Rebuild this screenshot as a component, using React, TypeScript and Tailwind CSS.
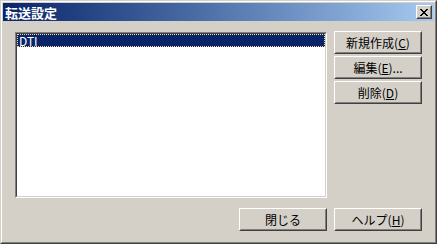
import React from "react"

const font = { fontFamily: '"Noto Sans CJK JP", "DejaVu Sans", sans-serif' }

function Key({ k }: { k: string }) {
  return <span className="underline underline-offset-1">{k}</span>
}

function WinButton({ children, className = "" }: { children: React.ReactNode; className?: string }) {
  return (
    <div className={`border border-t-white border-l-white border-b-[#404040] border-r-[#404040] ${className}`}>
      <div className="flex h-full w-full items-center justify-center border border-t-[#d4d0c8] border-l-[#d4d0c8] border-b-[#808080] border-r-[#808080] bg-[#d4d0c8] text-[12px] leading-none text-black">
        {children}
      </div>
    </div>
  )
}

export default function App() {
  return (
    <div className="h-[244px] w-[437px] overflow-hidden select-none" style={font}>
      {/* window frame */}
      <div className="h-full w-full border border-t-[#d4d0c8] border-l-[#d4d0c8] border-b-[#404040] border-r-[#404040]">
        <div className="flex h-full w-full flex-col border border-t-white border-l-white border-b-[#808080] border-r-[#808080] bg-[#d4d0c8] p-px">
          {/* title bar */}
          <div className="flex h-[18px] items-center justify-between bg-gradient-to-r from-[#0a246a] to-[#a6caf0] pl-[2px] pr-[2px]">
            <span className="text-[13px] font-bold leading-none text-white">転送設定</span>
            <WinButton className="h-[14px] w-[16px]">
              <svg width="8" height="7" viewBox="0 0 8 7" shapeRendering="crispEdges">
                <path d="M0 0h2v1H0zM6 0h2v1H6zM1 1h2v1H1zM5 1h2v1H5zM2 2h4v1H2zM3 3h2v1H3zM2 4h4v1H2zM1 5h2v1H1zM5 5h2v1H5zM0 6h2v1H0zM6 6h2v1H6z" fill="#000" />
              </svg>
            </WinButton>
          </div>

          {/* body */}
          <div className="flex flex-1 flex-col px-[12px] pt-[11px]">
            <div className="flex gap-[7px]">
              {/* list box */}
              <div className="h-[166px] w-[312px] border border-t-[#808080] border-l-[#808080] border-b-white border-r-white">
                <div className="h-full w-full border border-t-[#404040] border-l-[#404040] border-b-[#d4d0c8] border-r-[#d4d0c8] bg-white">
                  <div className="flex h-[13px] items-center border border-dotted border-[#f5db95] bg-[#0a246a] pl-[1px] text-[12px] leading-none text-white">
                    DTI
                  </div>
                </div>
              </div>
              {/* side buttons */}
              <div className="flex flex-col gap-[2px] -mt-px">
                <WinButton className="h-[23px] w-[88px]">
                  新規作成(<Key k="C" />)
                </WinButton>
                <WinButton className="h-[23px] w-[88px]">
                  編集(<Key k="E" />)...
                </WinButton>
                <WinButton className="h-[23px] w-[88px]">
                  削除(<Key k="D" />)
                </WinButton>
              </div>
            </div>
            {/* bottom buttons */}
            <div className="mt-[10px] flex justify-end gap-[7px]">
              <WinButton className="h-[23px] w-[88px]">閉じる</WinButton>
              <WinButton className="h-[23px] w-[88px]">
                ヘルプ(<Key k="H" />)
              </WinButton>
            </div>
          </div>
        </div>
      </div>
    </div>
  )
}
